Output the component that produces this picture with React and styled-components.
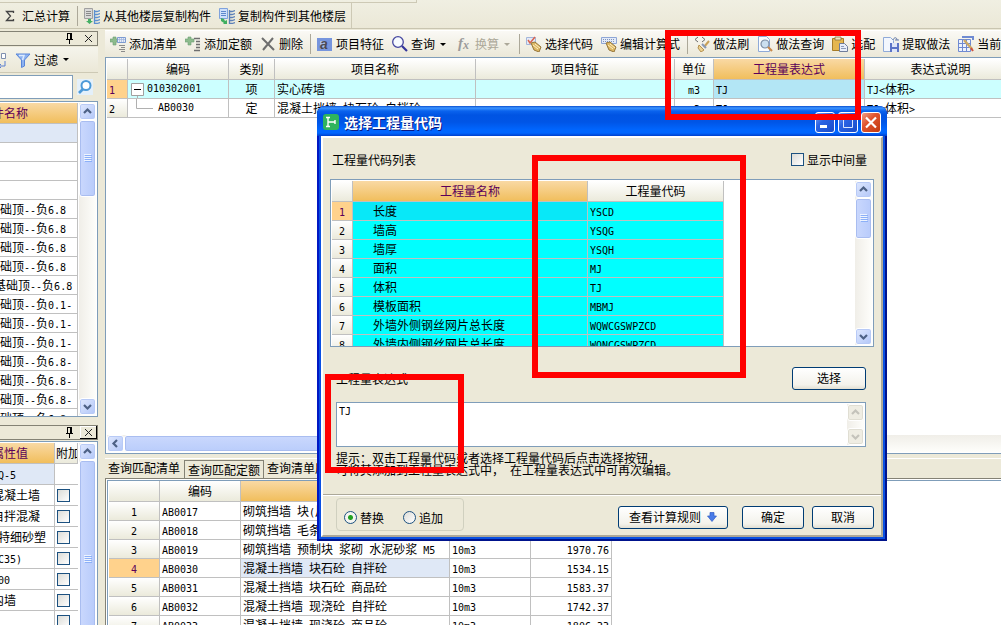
import React from 'react';
import styled, { createGlobalStyle, css } from 'styled-components';

const COLORS = {
  face: '#ece9d8',
  grid: '#c0c0c0',
  edge: '#7f9db9',
  purple: '#5a005a',
  cyan: '#00ffff',
  paleCyan: '#ccffff',
  paleBlue: '#dfe8f6',
};

const headerFill = 'linear-gradient(#ffffff, #ebeadb)';
const activeFill = 'linear-gradient(#f9d9a4, #f1be5c)';

const GlobalStyle = createGlobalStyle`
  * { box-sizing: border-box; }
  body {
    margin: 0;
    background: ${COLORS.face};
    overflow: hidden;
  }
  body, button, input, textarea {
    font-family: "Noto Sans CJK SC", sans-serif;
    font-size: 12px;
    color: #000;
  }
`;

/* ---------- shared pieces ---------- */

const Mono = styled.span`
  font-family: "DejaVu Sans Mono", monospace;
  font-size: 10px;
  line-height: 1;
  white-space: pre;
`;

// latin runs are half as wide as the chinese glyphs
const Mixed = ({ children }) =>
  String(children)
    .split(/([\x20-\x7e]+)/)
    .map((part, i) => (i % 2 ? <Mono key={i}>{part}</Mono> : part));

const Table = styled.table`
  table-layout: fixed;
  border-collapse: separate;
  border-spacing: 0;
  width: ${({ $width }) => $width}px;
  flex: none;
  align-self: flex-start;
`;

const Th = styled.th`
  height: 21px;
  padding: 0 ${({ $pad }) => $pad || 0}px;
  line-height: 20px;
  font-weight: normal;
  text-align: ${({ $align }) => $align || 'center'};
  white-space: nowrap;
  overflow: hidden;
  border-right: 1px solid ${COLORS.grid};
  border-bottom: 1px solid ${COLORS.grid};
  background: ${({ $active }) => ($active ? activeFill : headerFill)};
  color: ${({ $active }) => ($active ? COLORS.purple : '#000')};
`;

const Td = styled.td`
  height: ${({ $tall }) => ($tall ? 21 : 19)}px;
  line-height: ${({ $tall }) => ($tall ? 20 : 18)}px;
  padding: 0 2px 0 ${({ $indent }) => ($indent === undefined ? 2 : $indent)}px;
  text-align: ${({ $align }) => $align || 'left'};
  white-space: nowrap;
  overflow: hidden;
  border-right: 1px solid ${COLORS.grid};
  border-bottom: 1px solid ${COLORS.grid};
  background: ${({ $fill }) => $fill || '#fff'};
`;

const RowNumber = styled(Td)`
  text-align: ${({ $align }) => $align || 'center'};
  background: ${({ $active }) => ($active ? '#ffd28c' : headerFill)};
  color: ${({ $active }) => ($active ? COLORS.purple : '#000')};
`;

const Cols = ({ widths }) => (
  <colgroup>
    {widths.map((w, i) => (
      <col key={i} style={{ width: w }} />
    ))}
  </colgroup>
);

const Check = styled.input.attrs({ type: 'checkbox' })`
  appearance: none;
  width: 13px;
  height: 13px;
  margin: 0;
  flex: none;
  border: 1px solid #1c5180;
  background: linear-gradient(135deg, #dcdcd7, #ffffff);
`;

const Radio = styled.input.attrs({ type: 'radio' })`
  appearance: none;
  width: 13px;
  height: 13px;
  margin: 0;
  border: 1px solid #1c5180;
  border-radius: 50%;
  background: linear-gradient(135deg, #dcdcd7, #ffffff);
  &:checked {
    background: radial-gradient(circle, #21a121 0, #21a121 2px, #f4f4f0 3px);
  }
`;

/* ---------- scroll bars ---------- */

const ScrollTrack = styled.div`
  flex: none;
  display: flex;
  flex-direction: ${({ $horizontal }) => ($horizontal ? 'row' : 'column')};
  ${({ $horizontal }) =>
    $horizontal
      ? css`
          height: 17px;
          background: linear-gradient(#f0eee8, #fefefb);
        `
      : css`
          width: 17px;
          background: linear-gradient(90deg, #f0eee8, #fefefb);
        `}
`;

const ScrollButton = styled.button`
  flex: none;
  width: 17px;
  height: 17px;
  padding: 0;
  display: flex;
  align-items: center;
  justify-content: center;
  border: 1px solid #fff;
  border-radius: 3px;
  color: ${({ $disabled }) => ($disabled ? '#c4c3bb' : '#4d6185')};
  background: ${({ $disabled }) =>
    $disabled ? '#efede3' : 'linear-gradient(135deg, #dfe8fe, #b3c7f8)'};
  box-shadow: inset 0 0 0 1px ${({ $disabled }) => ($disabled ? '#e0ded3' : '#b8caf6')};
`;

const ScrollThumb = styled.div`
  flex: 0 0 ${({ $size }) => $size}px;
  display: flex;
  align-items: center;
  justify-content: center;
  border: 1px solid #fff;
  border-radius: 3px;
  box-shadow: inset 0 0 0 1px #a9bdf0;
  background: ${({ $horizontal }) =>
    $horizontal
      ? 'linear-gradient(#cad8fd, #bacdfb)'
      : 'linear-gradient(90deg, #cad8fd, #b8cbfb)'};
`;

const Spacer = styled.div`
  flex: 1;
`;

const turns = { up: 0, right: 90, down: 180, left: 270 };

const Chevron = ({ to }) => (
  <svg width="9" height="9" viewBox="0 0 9 9">
    <path
      d="M1 6 L4.5 2.5 L8 6"
      fill="none"
      stroke="currentColor"
      strokeWidth="2.2"
      transform={`rotate(${turns[to]} 4.5 4.5)`}
    />
  </svg>
);

const Grip = () => (
  <svg width="8" height="9" viewBox="0 0 8 9">
    <path d="M0 .5H7M0 2.5H7M0 4.5H7M0 6.5H7" stroke="#eef4fe" />
    <path d="M1 1.5H8M1 3.5H8M1 5.5H8M1 7.5H8" stroke="#8cb0f8" />
  </svg>
);

const VScroll = ({ size, disabled }) => (
  <ScrollTrack>
    <ScrollButton $disabled={disabled} aria-label="向上滚动"><Chevron to="up" /></ScrollButton>
    {!disabled && <ScrollThumb $size={size}><Grip /></ScrollThumb>}
    <Spacer />
    <ScrollButton $disabled={disabled} aria-label="向下滚动"><Chevron to="down" /></ScrollButton>
  </ScrollTrack>
);

/* ---------- icons ---------- */

const Svg = ({ children, w = 16 }) => (
  <svg width={w} height="16" viewBox={`0 0 ${w} 16`} fill="none" aria-hidden="true">
    {children}
  </svg>
);

const plus = <path d="M3 1h3v2h3v3H6v3H3V6H0V3h3z" fill="#8dbb8d" stroke="#6c9f72" strokeWidth=".6" />;

const floors = 'M10.500 2v14M11 3.500h2l3-1M11 6.500h2l3-1M11 9.500h2l3-1M11 12.500h2l3-1M11 15.500h2l3-1';

const icons = {
  sum: (
    <Svg w={10}>
      <path d="M8.500 5V3.500H1.500L5.500 8L1.500 12.500H8.500V11" stroke="#444" strokeWidth="1.300" />
    </Svg>
  ),
  copyFrom: (
    <Svg>
      <path d="M.500 .500h8v10h-8z" fill="#d9d9d9" stroke="#a0a0a0" />
      <path d="M2 3.500h5M2 5.500h5M2 7.500h5" stroke="#8a8a8a" />
      <path d="M4 11h3v2h2l-3.500 3L2 13h2z" fill="#45b065" />
      <path d={floors} stroke="#5b8fd0" strokeWidth="1.300" />
    </Svg>
  ),
  copyTo: (
    <Svg>
      <path d="M.500 .500h8v10h-8z" fill="#cfe0fa" stroke="#7fa2dc" />
      <path d="M2 3.500h5M2 5.500h5M2 7.500h5" stroke="#5f88cc" />
      <path d="M2 10l3 1 1 2 2-1v4H4l1-1-3-2z" fill="#3fae60" />
      <path d={floors} stroke="#5b7fb8" strokeWidth="1.300" />
    </Svg>
  ),
  addList: (
    <Svg>
      {plus}
      <path d="M7.500 1.500h8v5h-8z" fill="#e6ecf8" stroke="#7d9bd1" />
      <path d="M8 3.500h7M9.500 2v4M11.500 2v4M13.500 2v4" stroke="#9db3dc" strokeWidth=".7" />
      <path d="M9 9.500h6M11 11.500h4M9 13.500h6M11 15.500h4" stroke="#8b8b8b" />
    </Svg>
  ),
  addQuota: (
    <Svg>
      {plus}
      <path d="M9 2.500h6M11 5.500h4M11 8.500h4M11 11.500h4M9 14.500h6" stroke="#6f6f6f" strokeWidth="1.300" />
    </Svg>
  ),
  remove: (
    <Svg>
      <path d="M2 2l12 12M13 2L3 14" stroke="#6e6e6e" strokeWidth="2" />
    </Svg>
  ),
  feature: (
    <Svg>
      <path d="M0 2h15v13H0z" fill="#7795dd" />
      <path d="M3 5h6v8H3z" fill="#a9bdea" />
      <text x="3" y="13" fontFamily="Liberation Sans" fontWeight="bold" fontStyle="italic" fontSize="14" fill="#4a4a55">a</text>
    </Svg>
  ),
  search: (
    <Svg>
      <circle cx="6" cy="6" r="5.300" fill="#f7fbff" stroke="#4648a0" strokeWidth="1.300" />
      <path d="M10 10l5 5" stroke="#33359a" strokeWidth="2.200" />
    </Svg>
  ),
  fx: (
    <Svg>
      <text x="2" y="12" fontFamily="Liberation Serif" fontWeight="bold" fontStyle="italic" fontSize="15" fill="#9b9b9b">f</text>
      <text x="7" y="13" fontFamily="Liberation Serif" fontWeight="bold" fontStyle="italic" fontSize="12" fill="#9b9b9b">x</text>
    </Svg>
  ),
  pick: (
    <Svg>
      <path d="M.500 1.500h9v7h-9z" fill="#e4ebf8" stroke="#a4b6da" />
      <path d="M2 4l2 3 5-6" stroke="#d8634f" strokeWidth="1.500" />
      <path d="M5 7l4-1 6 5-2 5-5-2z" fill="#dcb765" stroke="#97773a" />
      <path d="M7 9l5 4M9 8l5 4" stroke="#fff0c4" />
    </Svg>
  ),
  edit: (
    <Svg>
      <path d="M.500 1.500h15v6H.500z" fill="#e4ebf8" stroke="#8ea6d6" />
      <path d="M2 3.500h12M2 5.500h12" stroke="#7e93bd" strokeDasharray="1 1" />
      <path d="M5 7l4-1 6 5-2 5-5-2z" fill="#dcb765" stroke="#97773a" />
      <path d="M7 9l5 4M9 8l5 4" stroke="#fff0c4" />
    </Svg>
  ),
  brush: (
    <Svg>
      <path d="M4 1L1 3.500 4 6M8 1l3 2.500L8 6" stroke="#6b6b6b" />
      <path d="M15 5l-5 6" stroke="#c9a25a" strokeWidth="2" />
      <path d="M5 9l5 5-3 2-3-4z" fill="#ecd28f" stroke="#b59050" />
      <path d="M8 8l4 4" stroke="#8999b5" strokeWidth="2" />
    </Svg>
  ),
  lookup: (
    <Svg>
      <path d="M1.500 .500h8l3 3v12h-11z" fill="#fafcff" stroke="#8faad8" />
      <circle cx="8" cy="8" r="4" fill="#cbdff0" stroke="#7c8ea5" strokeWidth="1.200" />
      <path d="M11 11l4 4" stroke="#c98a4c" strokeWidth="2.200" />
    </Svg>
  ),
  paste: (
    <Svg>
      <path d="M.500 2.500h11v12H.500z" fill="#e4b64e" stroke="#a67c28" />
      <path d="M3 1h6v3H3z" fill="#efe6c6" stroke="#8b7440" strokeWidth=".8" />
      <path d="M7.500 7.500h5l3 3v5h-8z" fill="#e8eefa" stroke="#6f7d9b" />
      <path d="M9 10.500h3M9 12.500h5" stroke="#8c9cb9" />
    </Svg>
  ),
  extract: (
    <Svg>
      <path d="M.500 1.500h7l3 3v11H.500z" fill="#f2f6fd" stroke="#8faad8" />
      <path d="M7 7h9v9H7z" fill="#5c74c6" />
      <path d="M9 7h5v4H9zM9 13h5v3H9z" fill="#dfe6f8" />
      <path d="M10 4c1-3 4-3 4 0M12 4h4" stroke="#647aa8" />
    </Svg>
  ),
  current: (
    <Svg>
      <path d="M.500 3.500h12v12H.500zM.500 7.500h12M.500 11.500h12M4.500 3.500v12M8.500 3.500v12" fill="#eef3fc" stroke="#6f8ad2" />
      <path d="M4 1h11v3" stroke="#6f8ad2" strokeWidth="2" />
      <path d="M6 4l8 9" stroke="#cda964" strokeWidth="2.400" />
      <path d="M13 12l2 3" stroke="#d0503c" strokeWidth="2" />
    </Svg>
  ),
  swap: (
    <Svg>
      <path d="M10.500 1.500h4v5h-4z" fill="#fff" stroke="#7f8fae" />
      <path d="M8 14h6V9M10 12l-2 2 2 2" stroke="#5b7fd0" />
      <path d="M8.500 5v8" stroke="#777" />
    </Svg>
  ),
  funnel: (
    <Svg>
      <path d="M1 2h14l-5.500 6v6l-3 1.500V8z" fill="#8db2f0" stroke="#5a86d8" />
      <path d="M4 3.500h5L7.500 8" stroke="#dceafe" strokeWidth="1.500" />
    </Svg>
  ),
  magnify: (
    <Svg>
      <path d="M0 0h16v16H0z" fill="#e4f0fa" />
      <circle cx="9" cy="6.500" r="4.500" fill="#fff" stroke="#4d9ad8" strokeWidth="2" />
      <path d="M6 10l-4 4" stroke="#4d9ad8" strokeWidth="2.600" />
    </Svg>
  ),
};

const PinIcon = () => (
  <svg width="9" height="11" viewBox="0 0 9 11">
    <path d="M2.500 0v6M2 .5h4M1 6.500h7M4.500 7v4" stroke="#000" fill="none" />
    <path d="M5 0h2v6H5z" fill="#000" />
  </svg>
);

const CrossIcon = () => (
  <svg width="9" height="9" viewBox="0 0 9 9">
    <path d="M1 1l7 7M8 1L1 8" stroke="#222" />
  </svg>
);

const Caret = styled.span`
  width: 10px;
  display: flex;
  justify-content: center;
  &::after {
    content: '';
    border: 3px solid transparent;
    border-top-color: currentColor;
    border-bottom: 0;
  }
`;

/* ---------- page frame ---------- */

const Page = styled.div`
  position: relative;
  height: 100vh;
  display: flex;
  flex-direction: column;
  overflow: hidden;
  background: ${COLORS.face};
`;

const TopBar = styled.header`
  flex: none;
  height: 29px;
  display: flex;
  flex-direction: column;
  align-items: flex-start;
  background: linear-gradient(#f0efe2, #ebe8d7);
  border-bottom: 1px solid #c9c5b0;
`;

const MenuEdge = styled.div`
  width: 417px;
  height: 3px;
  border: solid #cdc9b5;
  border-width: 0 1px 1px 0;
`;

const TopTools = styled.div`
  flex: 1;
  display: flex;
  align-items: center;
  border-right: 1px solid #cdc9b5;
  padding: 0 1px;
`;

const ToolButton = styled.button`
  display: flex;
  align-items: center;
  gap: ${({ $wide }) => ($wide ? 7 : 3)}px;
  flex: none;
  padding: 0 4px;
  border: 0;
  background: none;
  line-height: 18px;
  white-space: nowrap;
  color: ${({ $dim }) => ($dim ? '#aca899' : '#000')};
`;

const Divider = styled.span`
  flex: none;
  width: 1px;
  height: 20px;
  margin: 0 2px 0 3px;
  background: #aca899;
`;

const Body = styled.div`
  flex: 1;
  min-height: 0;
  display: flex;
  gap: 7px;
`;

/* ---------- left side ---------- */

// the docked side is scrolled a little past the window edge
const Side = styled.aside`
  flex: none;
  width: 122px;
  margin-left: -24px;
  display: flex;
  flex-direction: column;
  padding-top: 2px;
`;

const PanelTitle = styled.div`
  flex: none;
  height: 15px;
  display: flex;
  align-items: center;
  justify-content: flex-end;
  gap: 6px;
  border: 1px solid #848275;
`;

const TitleButton = styled.button`
  width: 17px;
  height: 13px;
  padding: 0;
  display: flex;
  align-items: center;
  justify-content: center;
  background: none;
  border: 0 solid #000;
  ${({ $raised }) => $raised && 'border-width: 0 1px 1px 0; box-shadow: inset 1px 1px #fff;'}
`;

const FilterBar = styled.div`
  flex: none;
  height: 26px;
  margin-top: 1px;
  padding-left: 11px;
  display: flex;
  align-items: center;
  border-bottom: 1px solid #cdc9b5;
  background: linear-gradient(#f5f4ec, #ebe8d7);
`;

const SearchRow = styled.form`
  flex: none;
  display: flex;
  align-items: center;
  height: 25px;
  margin: 1px 0 2px;
`;

const SearchInput = styled.input`
  width: 97px;
  height: 24px;
  border: 1px solid ${COLORS.edge};
`;

const ListPanel = styled.div`
  flex: 1;
  min-height: 0;
  display: flex;
  justify-content: space-between;
  overflow: hidden;
  padding: 1px;
  background: #fff;
  border: 1px solid ${COLORS.edge};
`;

const PropertyArea = styled.section`
  flex: 0 0 200px;
  margin-top: 8px;
  display: flex;
  flex-direction: column;
  overflow: hidden;
`;

const PropertyTable = styled(ListPanel)`
  margin-top: 1px;
  padding-bottom: 0;
  border-bottom: 0;
`;

const CheckCell = styled(Td)`
  padding: 4px 2px 3px;
  line-height: 0;
  border-right: 0;
`;

const components = [
  '', '', '', '',
  '基础顶--负6.8', '基础顶--负6.8', '基础顶--负6.8', '基础顶--负6.8',
  ' 基础顶--负6.8',
  '基础顶--负0.1-', '基础顶--负0.1-', '基础顶--负0.1-',
  '基础顶--负6.8-', '基础顶--负6.8-', '基础顶--负6.8-', '基础顶--负6.8-',
];

const properties = ['DQ-5', '混凝土墙', '自拌混凝', '(特细砂塑', '(C35)', '300', '内墙', ''];

const LeftSide = () => (
  <Side>
    <PanelTitle>
      <PinIcon />
      <TitleButton aria-label="关闭"><CrossIcon /></TitleButton>
    </PanelTitle>
    <FilterBar>
      <ToolButton aria-label="排序">{icons.swap}</ToolButton>
      <ToolButton>{icons.funnel}过滤<Caret /></ToolButton>
    </FilterBar>
    <SearchRow>
      <SearchInput aria-label="搜索构件" />
      <ToolButton type="button" aria-label="搜索">{icons.magnify}</ToolButton>
    </SearchRow>
    <ListPanel>
      <Table $width={100}>
        <thead>
          <tr><Th $active $align="left" $pad={2}>构件名称</Th></tr>
        </thead>
        <tbody>
          {components.map((name, i) => (
            <tr key={i}>
              <Td $indent={10} $fill={i === 0 ? COLORS.paleBlue : '#fff'}>
                <Mixed>{name}</Mixed>
              </Td>
            </tr>
          ))}
        </tbody>
      </Table>
      <VScroll size={77} />
    </ListPanel>
    <PropertyArea>
      <PanelTitle>
        <PinIcon />
        <TitleButton $raised aria-label="关闭"><CrossIcon /></TitleButton>
      </PanelTitle>
      <PropertyTable>
        <Table $width={100}>
          <Cols widths={[77, 23]} />
          <thead>
            <tr>
              <Th $active $align="left" $pad={14}>属性值</Th>
              <Th $align="left" $pad={1}>附加</Th>
            </tr>
          </thead>
          <tbody>
            {properties.map((value, i) => (
              <tr key={i}>
                <Td $tall $indent={14} $fill={i === 0 ? COLORS.paleBlue : '#fff'}>
                  <Mixed>{value}</Mixed>
                </Td>
                <CheckCell $tall>{i > 0 && <Check aria-label={`附加 ${value}`} />}</CheckCell>
              </tr>
            ))}
          </tbody>
        </Table>
        <VScroll size={198} />
      </PropertyTable>
    </PropertyArea>
  </Side>
);

/* ---------- main side ---------- */

const Main = styled.main`
  flex: 1;
  min-width: 0;
  display: flex;
  flex-direction: column;
  padding-top: 1px;
`;

const ToolBar = styled.div`
  flex: none;
  height: 27px;
  display: flex;
  align-items: center;
  overflow: hidden;
  padding-left: 1px;
  background: linear-gradient(#faf9f5, #ebe8d8);
  border-top: 1px solid #fff;
`;

const GridPanel = styled.section`
  flex: 1;
  min-height: 0;
  display: flex;
  flex-direction: column;
  overflow: hidden;
  padding: 1px 0 1px 1px;
  background: #fff;
  border: 1px solid ${COLORS.edge};
  border-right: 0;
`;

const TreeCell = styled.span`
  display: flex;
  align-items: center;
  height: 18px;
`;

const Tabs = styled.div`
  flex: none;
  height: 20px;
  margin-top: 4px;
  display: flex;
  align-items: flex-start;
  border-top: 1px solid #fff;
`;

const Tab = styled.button`
  height: ${({ $active }) => ($active ? 18 : 17)}px;
  padding: 0 3px;
  border: 0 solid #848275;
  background: none;
  line-height: 17px;
  white-space: nowrap;
  ${({ $active }) => $active && 'border-width: 1px 1px 0; margin: 1px 0 0 1px;'}
`;

const QuotaFrame = styled.section`
  flex: 0 0 147px;
  overflow: hidden;
  border: solid #848275;
  border-width: 1px 0 0 1px;
  padding: 1px 0 0 1px;
  background: #fff;
`;

const QuotaInner = styled.div`
  border: solid ${COLORS.edge};
  border-width: 1px 0 0 1px;
  padding-left: 1px;
`;

const Collapse = () => (
  <svg width="19" height="18" viewBox="0 0 19 18">
    <path d="M3.500 3.500h12v12h-12z" fill="#fff" stroke="#a0a0a0" />
    <path d="M6 9.500h7" stroke="#000" />
    <path d="M9.500 16v2" stroke="#b0b0b0" />
  </svg>
);

const Elbow = () => (
  <svg width="30" height="18" viewBox="0 0 30 18">
    <path d="M8.500 0v9.500H25" fill="none" stroke="#b0b0b0" />
  </svg>
);

const quotas = [
  ['AB0017', '砌筑挡墙 块(片)石', '10m3', '1620.45'],
  ['AB0018', '砌筑挡墙 毛条石', '10m3', '1812.06'],
  ['AB0019', '砌筑挡墙 预制块 浆砌 水泥砂浆 M5', '10m3', '1970.76'],
  ['AB0030', '混凝土挡墙 块石砼 自拌砼', '10m3', '1534.15'],
  ['AB0031', '混凝土挡墙 块石砼 商品砼', '10m3', '1583.37'],
  ['AB0032', '混凝土挡墙 现浇砼 自拌砼', '10m3', '1742.37'],
  ['AB0033', '混凝土挡墙 现浇砼 商品砼', '10m3', '1806.33'],
];

const MainSide = () => (
  <Main>
    <ToolBar>
      <ToolButton>{icons.addList}添加清单</ToolButton>
      <ToolButton>{icons.addQuota}添加定额</ToolButton>
      <ToolButton>{icons.remove}删除</ToolButton>
      <Divider />
      <ToolButton>{icons.feature}项目特征</ToolButton>
      <ToolButton>{icons.search}查询<Caret /></ToolButton>
      <ToolButton $dim>{icons.fx}换算<Caret /></ToolButton>
      <Divider />
      <ToolButton>{icons.pick}选择代码</ToolButton>
      <ToolButton>{icons.edit}编辑计算式</ToolButton>
      <Divider />
      <ToolButton>{icons.brush}做法刷</ToolButton>
      <ToolButton>{icons.lookup}做法查询</ToolButton>
      <ToolButton>{icons.paste}选配</ToolButton>
      <ToolButton>{icons.extract}提取做法</ToolButton>
      <ToolButton>{icons.current}当前构件</ToolButton>
    </ToolBar>
    <GridPanel>
      <Table $width={910}>
        <Cols widths={[21, 101, 46, 201, 199, 39, 151, 152]} />
        <thead>
          <tr>
            <Th />
            <Th>编码</Th>
            <Th>类别</Th>
            <Th>项目名称</Th>
            <Th>项目特征</Th>
            <Th>单位</Th>
            <Th $active>工程量表达式</Th>
            <Th>表达式说明</Th>
          </tr>
        </thead>
        <tbody>
          <tr>
            <RowNumber $active $align="left"><Mono>1</Mono></RowNumber>
            <Td $indent={0} $fill={COLORS.paleCyan}>
              <TreeCell><Collapse /><Mono>010302001</Mono></TreeCell>
            </Td>
            <Td $align="center" $fill={COLORS.paleCyan}>项</Td>
            <Td $fill={COLORS.paleCyan}>实心砖墙</Td>
            <Td $fill={COLORS.paleCyan} />
            <Td $align="center" $fill={COLORS.paleCyan}><Mono>m3</Mono></Td>
            <Td $fill="#b3e6f5"><Mono>TJ</Mono></Td>
            <Td $fill={COLORS.paleCyan}><Mixed>{'TJ<体积>'}</Mixed></Td>
          </tr>
          <tr>
            <RowNumber $align="left"><Mono>2</Mono></RowNumber>
            <Td $indent={0}>
              <TreeCell><Elbow /><Mono>AB0030</Mono></TreeCell>
            </Td>
            <Td $align="center">定</Td>
            <Td><Mixed>混凝土挡墙 块石砼 自拌砼</Mixed></Td>
            <Td />
            <Td $align="center"><Mono>m3</Mono></Td>
            <Td><Mono>TJ</Mono></Td>
            <Td><Mixed>{'TJ<体积>'}</Mixed></Td>
          </tr>
        </tbody>
      </Table>
      <Spacer />
      <ScrollTrack $horizontal>
        <ScrollButton aria-label="向左滚动"><Chevron to="left" /></ScrollButton>
        <ScrollThumb $horizontal $size={640} />
      </ScrollTrack>
    </GridPanel>
    <Tabs>
      <Tab>查询匹配清单</Tab>
      <Tab $active>查询匹配定额</Tab>
      <Tab>查询清单库</Tab>
    </Tabs>
    <QuotaFrame>
      <QuotaInner>
        <Table $width={503}>
          <Cols widths={[51, 81, 209, 81, 81]} />
          <thead>
            <tr>
              <Th />
              <Th>编码</Th>
              <Th $active>名称</Th>
              <Th>单位</Th>
              <Th>单价</Th>
            </tr>
          </thead>
          <tbody>
            {quotas.map(([code, name, unit, price], i) => (
              <tr key={code}>
                <RowNumber $active={i === 3}><Mono>{i + 1}</Mono></RowNumber>
                <Td><Mono>{code}</Mono></Td>
                <Td $fill={i === 3 ? COLORS.paleBlue : '#fff'}><Mixed>{name}</Mixed></Td>
                <Td><Mono>{unit}</Mono></Td>
                <Td $align="right"><Mono>{price}</Mono></Td>
              </tr>
            ))}
          </tbody>
        </Table>
      </QuotaInner>
    </QuotaFrame>
  </Main>
);

/* ---------- dialog ---------- */

const Window = styled.div`
  position: absolute;
  left: 317px;
  top: 106px;
  width: 570px;
  padding: 0 4px 4px;
  border-radius: 8px 8px 0 0;
  background: #0a50e2;
  box-shadow: inset 2px 0 #0018c4, inset -2px -2px #00138c;
  overflow: hidden;
`;

const TitleBar = styled.div`
  height: 30px;
  margin: 0 -4px;
  padding: 2px 6px 0;
  display: flex;
  align-items: center;
  gap: 3px;
  background: linear-gradient(
    #0a4fd0 0, #3d95ff 2px, #0a63ee 5px, #0054e3 9px,
    #0055e6 16px, #0066ff 24px, #0066ff 27px, #0040cc 30px
  );
`;

const TitleText = styled.h1`
  flex: 1;
  margin: 0 0 0 2px;
  font-size: 14px;
  line-height: 20px;
  font-weight: bold;
  color: #fff;
  text-shadow: 1px 1px #0a1883;
`;

const CaptionButton = styled.button`
  width: 20px;
  height: 21px;
  padding: 0;
  border: 1px solid #fff;
  border-radius: 3px;
  background: ${({ $close }) =>
    $close
      ? 'linear-gradient(135deg, #f0a088, #e0552f 40%, #c23a10)'
      : 'linear-gradient(135deg, #7aa5f5, #2a63e4 40%, #1a4cc8)'};
`;

const Client = styled.div`
  background: ${COLORS.face};
  border: 2px solid;
  border-color: #fff #aca899 #aca899 #fff;
`;

const ListHead = styled.div`
  height: 41px;
  padding: 2px 14px 0 9px;
  display: flex;
  align-items: center;
  justify-content: space-between;
`;

const CheckLabel = styled.label`
  display: flex;
  align-items: center;
  gap: 3px;
`;

const CodeList = styled(ListPanel)`
  margin: 0 7px;
  height: 168px;
`;

const Expression = styled.div`
  margin: 0 15px 0 13px;
`;

const ExpressionHead = styled.div`
  display: flex;
  align-items: center;
  justify-content: space-between;
  padding: 20px 0 12px;
`;

const PushButton = styled.button`
  width: ${({ $width }) => $width}px;
  height: 23px;
  padding: 0 0 2px;
  display: flex;
  align-items: center;
  justify-content: center;
  gap: 6px;
  border: 1px solid #003c74;
  border-radius: 3px;
  background: linear-gradient(#ffffff, #f3f2eb 80%, #e2dfd2);
`;

const Editor = styled.div`
  height: 45px;
  display: flex;
  padding: 1px;
  background: #fff;
  border: 1px solid ${COLORS.edge};
`;

const EditorText = styled.textarea`
  flex: 1;
  padding: 2px 1px;
  border: 0;
  resize: none;
  outline: none;
  overflow: hidden;
  font-family: "DejaVu Sans Mono", monospace;
  font-size: 10px;
  line-height: 12px;
`;

const Hint = styled.p`
  margin: 5px 0 17px;
  line-height: 12px;
  white-space: nowrap;
`;

const Footer = styled.div`
  height: 41px;
  display: flex;
  align-items: flex-start;
  gap: 8px;
  padding: 2px 7px 0 13px;
  border-top: 1px solid #aca899;
  box-shadow: inset 0 1px #fff;
`;

const ModeGroup = styled.fieldset`
  width: 128px;
  height: 33px;
  margin: 1px auto 0 0;
  padding: 6px 7px 0;
  display: flex;
  align-items: center;
  gap: 19px;
  border: 1px solid #d0d0bf;
  border-radius: 4px;
`;

const Actions = styled.div`
  display: flex;
  gap: 8px;
  padding-top: 9px;
  & > :first-child {
    margin-right: 6px;
  }
`;

const codes = [
  ['长度', 'YSCD'],
  ['墙高', 'YSQG'],
  ['墙厚', 'YSQH'],
  ['面积', 'MJ'],
  ['体积', 'TJ'],
  ['模板面积', 'MBMJ'],
  ['外墙外侧钢丝网片总长度', 'WQWCGSWPZCD'],
  ['外墙内侧钢丝网片总长度', 'WQNCGSWPZCD'],
];

const CodeDialog = () => (
  <Window role="dialog" aria-label="选择工程量代码">
    <TitleBar>
      <svg width="16" height="16" viewBox="0 0 16 16">
        <rect width="16" height="16" rx="3" fill="#2fb45f" />
        <path d="M3 3.500h4M5 3v10M3 12.500h4M5 8h7M12 6v4" stroke="#fff" strokeWidth="1.400" fill="none" />
      </svg>
      <TitleText>选择工程量代码</TitleText>
      <CaptionButton aria-label="最小化">
        <svg width="18" height="19" viewBox="0 0 18 19"><path d="M4 13.500h7" stroke="#fff" strokeWidth="3" /></svg>
      </CaptionButton>
      <CaptionButton aria-label="最大化">
        <svg width="18" height="19" viewBox="0 0 18 19">
          <path d="M4.500 4.500h9v10h-9z" stroke="#dbe7ff" fill="none" />
          <path d="M4 5h10" stroke="#fff" strokeWidth="2" />
        </svg>
      </CaptionButton>
      <CaptionButton $close aria-label="关闭">
        <svg width="18" height="19" viewBox="0 0 18 19"><path d="M4 4.500l10 10M14 4.500l-10 10" stroke="#fff" strokeWidth="2.200" /></svg>
      </CaptionButton>
    </TitleBar>
    <Client>
      <ListHead>
        <span>工程量代码列表</span>
        <CheckLabel><Check />显示中间量</CheckLabel>
      </ListHead>
      <CodeList>
        <Table $width={392}>
          <Cols widths={[21, 235, 136]} />
          <thead>
            <tr>
              <Th />
              <Th $active>工程量名称</Th>
              <Th>工程量代码</Th>
            </tr>
          </thead>
          <tbody>
            {codes.map(([name, code], i) => (
              <tr key={code}>
                <RowNumber $active={i === 0}><Mono>{i + 1}</Mono></RowNumber>
                <Td $indent={20} $fill={i === 0 ? '#08e8f8' : COLORS.cyan}>{name}</Td>
                <Td $fill={COLORS.cyan}><Mono>{code}</Mono></Td>
              </tr>
            ))}
          </tbody>
        </Table>
        <VScroll size={41} />
      </CodeList>
      <Expression>
        <ExpressionHead>
          <label htmlFor="expression">工程量表达式</label>
          <PushButton $width={74}>选择</PushButton>
        </ExpressionHead>
        <Editor>
          <EditorText id="expression" defaultValue="TJ" />
          <VScroll disabled />
        </Editor>
        <Hint>
          提示：双击工程量代码或者选择工程量代码后点击选择按钮，
          <br />
          可将其添加到工程量表达式中，<Mono> </Mono>在工程量表达式中可再次编辑。
        </Hint>
      </Expression>
      <Footer>
        <ModeGroup>
          <CheckLabel><Radio name="mode" defaultChecked />替换</CheckLabel>
          <CheckLabel><Radio name="mode" />追加</CheckLabel>
        </ModeGroup>
        <Actions>
          <PushButton $width={110}>
            查看计算规则
            <svg width="10" height="10" viewBox="0 0 10 10">
              <path d="M3 .5h4V4h2.500L5 9.500.5 4H3z" fill="#4a7be8" stroke="#2f5cc4" strokeWidth=".7" />
            </svg>
          </PushButton>
          <PushButton $width={62}>确定</PushButton>
          <PushButton $width={62}>取消</PushButton>
        </Actions>
      </Footer>
    </Client>
  </Window>
);

/* ---------- red marker boxes ---------- */

const Marker = styled.div`
  position: absolute;
  left: ${({ $x }) => $x}px;
  top: ${({ $y }) => $y}px;
  width: ${({ $w }) => $w}px;
  height: ${({ $h }) => $h}px;
  border: 6px solid #f00;
  pointer-events: none;
`;

const App = () => (
  <Page>
    <GlobalStyle />
    <TopBar>
      <MenuEdge />
      <TopTools>
        <ToolButton $wide>{icons.sum}汇总计算</ToolButton>
        <Divider />
        <ToolButton>{icons.copyFrom}从其他楼层复制构件</ToolButton>
        <ToolButton>{icons.copyTo}复制构件到其他楼层</ToolButton>
      </TopTools>
    </TopBar>
    <Body>
      <LeftSide />
      <MainSide />
    </Body>
    <CodeDialog />
    <Marker $x={665} $y={30} $w={196} $h={90} />
    <Marker $x={532} $y={155} $w={214} $h={223} />
    <Marker $x={325} $y={374} $w={139} $h={99} />
  </Page>
);

export default App;
